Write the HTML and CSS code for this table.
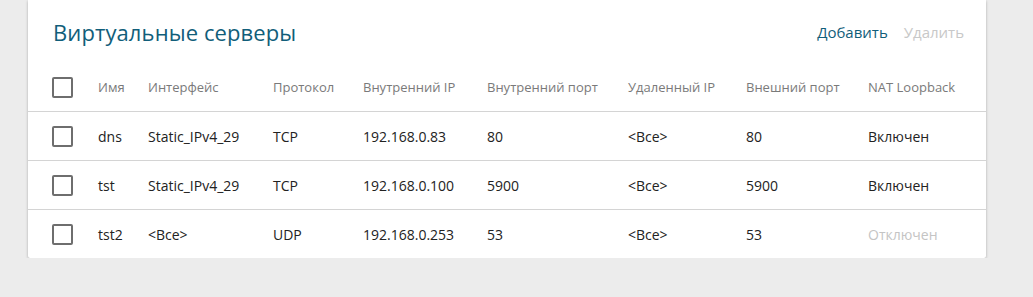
FILE: index.html
```html
<!DOCTYPE html>
<html lang="ru">
<head>
<meta charset="utf-8">
<title>Виртуальные серверы</title>
<link rel="stylesheet" href="styles.css">
</head>
<body>
<div class="page">
  <section class="card">
    <header class="card-head">
      <h1 class="title">Виртуальные серверы</h1>
      <div class="actions">
        <a class="action">Добавить</a>
        <a class="action disabled">Удалить</a>
      </div>
    </header>
    <div class="table">
      <div class="row head">
        <div class="cell"><span class="check"></span></div>
        <div class="cell">Имя</div>
        <div class="cell">Интерфейс</div>
        <div class="cell">Протокол</div>
        <div class="cell">Внутренний IP</div>
        <div class="cell">Внутренний порт</div>
        <div class="cell">Удаленный IP</div>
        <div class="cell">Внешний порт</div>
        <div class="cell">NAT Loopback</div>
      </div>
      <div class="row">
        <div class="cell"><span class="check"></span></div>
        <div class="cell">dns</div>
        <div class="cell">Static_IPv4_29</div>
        <div class="cell">TCP</div>
        <div class="cell">192.168.0.83</div>
        <div class="cell">80</div>
        <div class="cell">&lt;Все&gt;</div>
        <div class="cell">80</div>
        <div class="cell">Включен</div>
      </div>
      <div class="row">
        <div class="cell"><span class="check"></span></div>
        <div class="cell">tst</div>
        <div class="cell">Static_IPv4_29</div>
        <div class="cell">TCP</div>
        <div class="cell">192.168.0.100</div>
        <div class="cell">5900</div>
        <div class="cell">&lt;Все&gt;</div>
        <div class="cell">5900</div>
        <div class="cell">Включен</div>
      </div>
      <div class="row last">
        <div class="cell"><span class="check"></span></div>
        <div class="cell">tst2</div>
        <div class="cell">&lt;Все&gt;</div>
        <div class="cell">UDP</div>
        <div class="cell">192.168.0.253</div>
        <div class="cell">53</div>
        <div class="cell">&lt;Все&gt;</div>
        <div class="cell">53</div>
        <div class="cell off">Отключен</div>
      </div>
    </div>
  </section>
</div>
</body>
</html>
```
FILE: styles.css
```css
html, body {
  margin: 0;
  padding: 0;
  background: #ececec;
  font-family: "Open Sans", "Noto Sans", sans-serif;
}

.page {
  padding: 0 47px 0 28px;
}

.card {
  background: #fff;
  border-radius: 0 0 2px 2px;
  box-shadow: 0 1px 3px rgba(0, 0, 0, 0.28);
}

.card-head {
  height: 63px;
  display: flex;
  align-items: center;
  justify-content: space-between;
  padding: 0 22px 0 25px;
}

.title {
  margin: 0;
  font-size: 22px;
  font-weight: 400;
  color: #115e7a;
  letter-spacing: 0.1px;
}

.actions {
  display: flex;
  gap: 16px;
  font-size: 15px;
  margin-top: 0;
}

.action {
  color: #115e7a;
  cursor: pointer;
}

.action.disabled {
  color: #c8c8c8;
}

.row {
  display: grid;
  grid-template-columns: 46px 50px 125px 90px 124px 141px 118px 122px 1fr;
  align-items: center;
  height: 48px;
  padding-left: 24px;
  border-bottom: 1px solid #d4d4d4;
  font-size: 14px;
  color: #222;
}

.row.last {
  border-bottom: none;
}

.row.head {
  color: #7a7a7a;
  font-size: 13px;
}

.cell {
  white-space: nowrap;
}

.cell.off {
  color: #c4c4c4;
}

.check {
  display: block;
  width: 17px;
  height: 17px;
  border: 2px solid #6e6e6e;
  border-radius: 2px;
}
```
